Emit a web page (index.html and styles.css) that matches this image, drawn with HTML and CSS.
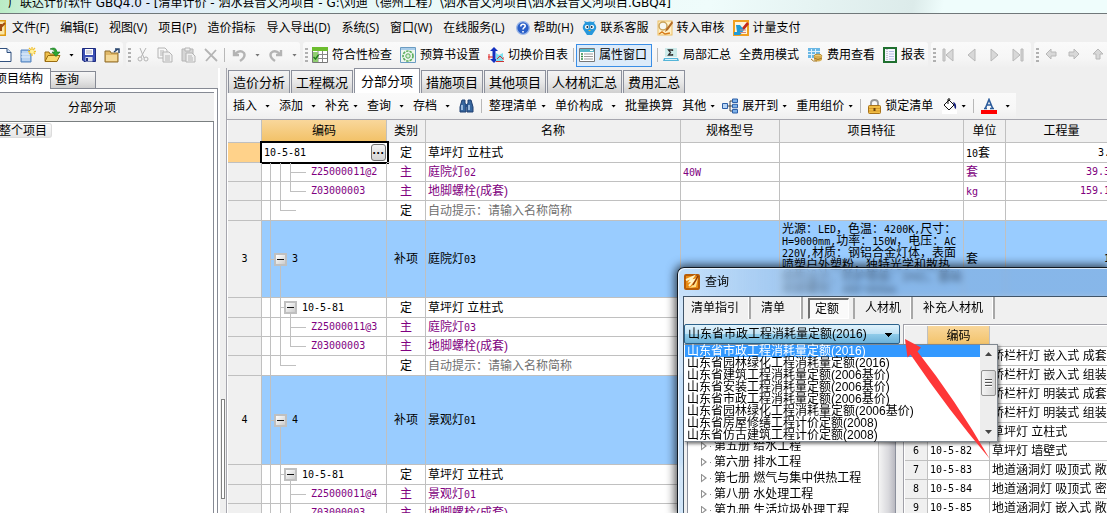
FILE: index.html
```html
<!DOCTYPE html>
<html lang="zh-CN">
<head>
<meta charset="utf-8">
<title>清单计价</title>
<link rel="stylesheet" href="styles.css">
</head>
<body>
<header class="title">广联达计价软件 GBQ4.0 - [清单计价 - 泗水县音文河项目 - G:\刘迪（德州工程）\泗水音文河项目\泗水县音文河项目.GBQ4]</header>

<nav class="menu">
  <svg class="app" width="6" height="16" viewBox="10 0 6 16"><rect x="0.5" y="0.5" width="15" height="15" rx="1" fill="#fbe6a8" stroke="#e09a10" stroke-width="2"/><path d="M5 13L15 3M11 4v7" stroke="#a04a10" stroke-width="2"/></svg>
  <button>文件(F)</button><button>编辑(E)</button><button>视图(V)</button><button>项目(P)</button><button>造价指标</button><button>导入导出(D)</button><button>系统(S)</button><button>窗口(W)</button><button>在线服务(L)</button>
  <button><svg width="14" height="14" viewBox="0 0 14 14"><circle cx="7" cy="7" r="6.3" fill="#2a5fc8" stroke="#9bb7e8" stroke-width="1.3"/><path d="M4.8 5.4c0-3 4.6-2.8 4.4-.2C9 6.800 7 6.700 7 8.500M7 10v1.600" fill="none" stroke="#fff" stroke-width="1.600"/></svg>帮助(H)</button>
  <button><svg width="15" height="16" viewBox="0 0 15 16"><path d="M3 3L2 1l3 1q3-1 6 0l2-1-1 2q3 3 2 6l-2 3-2 3H5l-2-3-2-3Q0 6 3 3z" fill="#2798dc"/><circle cx="5" cy="7" r="2.100" fill="#fff"/><circle cx="10" cy="7" r="2.100" fill="#fff"/><circle cx="5.400" cy="7" r="1" fill="#123"/><circle cx="9.600" cy="7" r="1" fill="#123"/><path d="M6 10h3l-1.500 1.500z" fill="#f6b020"/></svg>联系客服</button>
  <button><svg width="16" height="16" viewBox="0 0 16 16"><rect x="1" y="1" width="14" height="14" fill="#fff1c8" stroke="#eebf62"/><circle cx="6" cy="6" r="4" fill="#f7f7f0" stroke="#c9a25a" stroke-width="1.500"/><path d="M15 1L9 9l-1 3 3-2 5-7z" fill="#b36a24"/><path d="M2 14l3-2 3 2 5-1" stroke="#d77b1a" stroke-width="1.500" fill="none"/></svg>转入审核</button>
  <button><svg width="16" height="16" viewBox="0 0 16 16"><rect x="1" y="1" width="14" height="14" fill="#fff4dc" stroke="#f0a020" stroke-width="2"/><path d="M14 2L9 8l-1 3 3-1 5-6z" fill="#c3281c"/><path d="M3 5h4l4 5-4 5H1v-3h3z" fill="#1f9ad6"/><path d="M7 10h6M7 12.500h6" stroke="#c88" /></svg>计量支付</button>
</nav>

<div class="bars">
  <div class="band first">
    <button aria-label="新建"><svg width="12" height="16" viewBox="4 0 12 16"><path d="M2 1.500h9l4 4v9H2z" fill="#fff" stroke="#31507e"/><path d="M11 1.500v4h4" fill="#cfe0f6" stroke="#31507e"/></svg></button>
    <button aria-label="新建项目"><svg width="16" height="16" viewBox="0 0 16 16"><path d="M1 3h8l2 2v10H1z" fill="#8db7e6" stroke="#5582bd"/><path d="M3 4v10M5 4v10M7 4v10M9 5v9M1 7h9M1 10h9" stroke="#e5f0fc"/><path d="M12 0v9M8 4.500h8M9 1l6 6M15 1L9 7" stroke="#f2c230" stroke-width="1.300"/><circle cx="12" cy="4.500" r="2" fill="#fff3a0"/></svg></button>
    <button aria-label="打开"><svg width="17" height="16" viewBox="0 0 17 16"><path d="M1 14V5h4l1 2h6v7z" fill="#f0c04b" stroke="#9a6c10"/><path d="M1 14.500l3-6h12l-3 6z" fill="#fbd970" stroke="#9a6c10"/><path d="M6 2q6-3 7 3h3l-4 4.500L8 5h3Q10 2 6 2z" fill="#2ea832" stroke="#14701c" stroke-width=".6"/></svg></button>
    <button class="drop" aria-label="打开选项"></button>
    <button aria-label="保存"><svg width="14" height="14" viewBox="0 0 14 14"><path d="M.5.5h13v13H2L.5 12z" fill="#3c4fb4" stroke="#1c2b7e"/><path d="M3 1h8v6H3z" fill="#fff"/><path d="M4 3h6M4 5h6" stroke="#aab"/><path d="M3.500 9h7v4.500h-7z" fill="#d7dcea"/><path d="M5 10v3" stroke="#1c2b7e" stroke-width="2"/></svg></button>
    <button aria-label="关闭项目"><svg width="16" height="15" viewBox="0 0 16 15"><path d="M1 3h5l1 2h7v9H1z" fill="#e0b868" stroke="#8e6c2c"/><path d="M2 7h11v6H2z" fill="#f4d998"/><path d="M10 4l4-3M11 1h4v4" stroke="#28456e" stroke-width="1.500" fill="none"/></svg></button>
  </div>
  <div class="band edits">
    <i class="grip"></i>
    <button aria-label="剪切"><svg class="off" width="12" height="16" viewBox="0 0 12 16"><path d="M3 1l4 10M9 1L4 10"/><circle cx="3" cy="12" r="2"/><circle cx="9" cy="12" r="2"/></svg></button>
    <button aria-label="复制"><svg class="off" width="16" height="16" viewBox="0 0 16 16"><path d="M1 1h7l2 2v8H1zM3 4h4M3 6h5M3 8h5" /><path class="page" d="M6 5h6l3 3v7H6z"/><path d="M8 9h5M8 11h5M8 13h5"/></svg></button>
    <button aria-label="粘贴"><svg class="off" width="15" height="16" viewBox="0 0 15 16"><path class="board" d="M1 2h11v12H1z"/><path class="page" d="M4 1h5v3H4z"/><path class="page" d="M5 6h6l3 3v6H5z"/><path d="M7 9h4M7 11h5M7 13h5"/></svg></button>
    <button aria-label="删除"><svg class="off" width="14" height="16" viewBox="0 0 14 16"><path d="M1 2l12 12M12 3L2 14" stroke-width="1.800"/></svg></button>
    <i class="sep"></i>
    <button aria-label="撤销"><svg class="off" width="16" height="16" viewBox="0 0 16 16"><path d="M3 3v5h5M4 7q5-5 9-1 2 4-4 8" stroke-width="2.400"/></svg></button>
    <button class="drop gray" aria-label="撤销选项"></button>
    <button aria-label="重做"><svg class="off" width="16" height="16" viewBox="0 0 16 16"><path d="M13 3v5H8M12 7Q7 2 3 6q-2 4 4 8" stroke-width="2.400"/></svg></button>
    <button class="drop gray" aria-label="重做选项"></button>
  </div>
  <div class="band">
    <i class="grip"></i>
    <button><svg width="16" height="16" viewBox="0 0 16 16"><path d="M.5.5h15v15H.5z" fill="#fff" stroke="#777"/><path d="M0 0h16v4H0z" fill="#6cbd2e"/><path d="M1 7.500h14M1 11.500h14M6 4v11M10.500 4v11" stroke="#888"/><path d="M1 5h5v10H1z" fill="#8fce70"/><path d="M1.500 10l2 2 3-4" stroke="#1f7a1a" stroke-width="1.400" fill="none"/></svg>符合性检查</button>
    <button><svg width="16" height="16" viewBox="0 0 16 16"><path d="M.5.5h15v15H.5z" fill="#eef6f0" stroke="#6b9cc2"/><path d="M1 1h14v2H1z" fill="#a9cdea"/><circle cx="8" cy="9" r="5" fill="none" stroke="#58ac58" stroke-width="1.600" stroke-dasharray="2.500 1"/><circle cx="8" cy="9" r="2.200" fill="#d8efd8" stroke="#58ac58"/></svg>预算书设置</button>
    <button><svg width="16" height="16" viewBox="0 0 16 16"><path d="M6 0l4 4H7.500v8H10l-4 4-4-4h2.500V4H2z" fill="#1430c0"/><path d="M1 7v6M0 10h5M9 13h6v-3" stroke="#d22" fill="none"/><path d="M8 6l3 2 4-2v8H8z" fill="#7ee0ee"/><path d="M8 14.500h8M9 12l3-3 3 3" stroke="#c33" fill="none"/></svg>切换价目表</button>
    <i class="sep"></i>
    <button class="pressed"><svg width="16" height="14" viewBox="0 0 16 14"><path d="M.5.5h15v13H.5z" fill="#fff" stroke="#777"/><path d="M1 1h14v3H1z" fill="#57b8ca"/><path d="M11 2.500h3" stroke="#fff"/><path d="M2 6h2M2 8.500h2M2 11h2" stroke="#338a44" stroke-width="1.400"/><path d="M5 6h9M5 8.500h9M5 11h9" stroke="#999"/></svg>属性窗口</button>
    <i class="sep"></i>
    <button><svg width="16" height="14" viewBox="0 0 16 14"><path d="M2 0h12v9H2z" fill="#cdebea"/><path d="M9.500 3V2H5.500l2 2.500-2 2.500h4V6" stroke="#333" fill="none" stroke-width="1.300"/><path d="M1 10h14l1 3H0z" fill="#54b5d8"/><path d="M2 11.500h12" stroke="#d6f2fc"/></svg>局部汇总</button>
    <button>全费用模式</button>
    <button><svg width="16" height="14" viewBox="0 0 16 14"><path d="M1 0h12v10H1z" fill="#6ab7e4"/><path d="M1 3.500h12M1 6.500h12M4.500 1v9M8.500 1v9" stroke="#dff2fc"/><ellipse cx="11" cy="8" rx="4" ry="1.800" fill="#eccb78" stroke="#b68d35"/><path d="M7 8v4q4 3 8 0V8" fill="#d8ae50"/><path d="M7 10q4 3 8 0M4 11q2 3 6 2" stroke="#a57926" fill="none"/></svg>费用查看</button>
    <button><svg width="14" height="16" viewBox="0 0 14 16"><path d="M1 1h12v14H1z" fill="#f5f6ff" stroke="#207030" stroke-width="2"/><path d="M4 2v12" stroke="#99a" stroke-dasharray="1 1"/><path d="M6 4.500h5M6 7h5M6 9.500h5M6 12h5" stroke="#b4bce6"/></svg>报表</button>
  </div>
  <div class="band">
    <i class="grip"></i>
    <button aria-label="首条"><svg class="nav" width="16" height="16" viewBox="0 0 16 16"><path d="M3 2h2v12H3zM13 2v12L6 8z"/></svg></button>
    <button aria-label="上一条"><svg class="nav" width="16" height="16" viewBox="0 0 16 16"><path d="M11 2v12L4 8z"/></svg></button>
    <button aria-label="下一条"><svg class="nav" width="16" height="16" viewBox="0 0 16 16"><path d="M3 2v12l7-6z"/></svg></button>
    <button aria-label="末条"><svg class="nav" width="16" height="16" viewBox="0 0 16 16"><path d="M1 2v12l7-6zM9 2h2v12H9z"/></svg></button>
  </div>
  <div class="band last">
    <i class="grip"></i>
    <button aria-label="左移"><svg class="nav" width="16" height="16" viewBox="0 0 16 16"><path d="M3 7l5-5v3h5v4H8v3z"/></svg></button>
    <button aria-label="右移"><svg class="nav" width="16" height="16" viewBox="0 0 16 16"><path d="M12 7L7 2v3H2v4h5v3z"/></svg></button>
    <button aria-label="上移"><svg class="nav" width="16" height="16" viewBox="0 0 16 16"><path d="M7 2l5 5H9v5H5V7H2z"/></svg></button>
  </div>
</div>

<main>
  <aside>
    <div class="ltabs"><button class="on">项目结构</button><button>查询</button><i></i></div>
    <div class="lpanel">
      <div class="lhead">分部分项</div>
      <div class="ltree"><button>整个项目</button></div>
    </div>
  </aside>
  <div class="split"><i></i></div>

  <section class="work">
    <div class="tabs">
      <button>造价分析</button><button>工程概况</button><button class="on">分部分项</button><button>措施项目</button><button>其他项目</button><button>人材机汇总</button><button>费用汇总</button>
    </div>
    <div class="tools">
      <button>插入<i class="arr wide"></i></button><button>添加<i class="arr wide"></i></button><button>补充<i class="arr"></i></button><button>查询<i class="arr wide"></i></button><button>存档<i class="arr wide"></i></button>
      <button aria-label="查找"><svg width="15" height="14" viewBox="0 0 15 14"><path d="M3 1h3v3l1 2v7H1V8zM9 1h3l2 7v5H8V6l1-2z" fill="#37669e" stroke="#1f3f70"/><path d="M3 6v5M10 6v5" stroke="#b9d4f2" stroke-width="1.500"/><path d="M6 5h3v3H6z" fill="#274f86"/></svg></button>
      <i class="sep"></i>
      <button>整理清单<i class="arr"></i></button><button>单价构成<i class="arr wide"></i></button><button>批量换算</button><button>其他<i class="arr"></i></button>
      <button class="tight"><svg width="16" height="16" viewBox="0 0 16 16"><path d="M5 8h3M8 3v10M8 3h2M8 8h2M8 13h2" stroke="#444" fill="none"/><path d="M.5 5.500h5v5h-5z" fill="#b7d4f4" stroke="#2d5fa6"/><path d="M10.500 1h5v3.500h-5zM10.500 6.300h5v3.500h-5zM10.500 11.500h5V15h-5z" fill="#7fb2ea" stroke="#2d5fa6"/></svg>展开到<i class="arr"></i></button>
      <button>重用组价<i class="arr"></i></button>
      <i class="sep"></i>
      <button><svg width="13" height="15" viewBox="0 0 13 15"><path d="M3 7V4q0-3 3.500-3T10 4v3" fill="none" stroke="#999" stroke-width="1.800"/><rect x=".5" y="6.500" width="12" height="8" rx="1" fill="#f1bd45" stroke="#a9731a"/><path d="M1 9.500h11M1 12h11" stroke="#d79a2a"/><path d="M6.500 9v3" stroke="#6d4208" stroke-width="2"/></svg>锁定清单</button>
      <button aria-label="填充色"><svg width="15" height="16" viewBox="0 0 15 16"><path d="M0 12h15v4H0z" fill="#fff"/><path d="M2 7l5-5 5 5-5 5z" fill="#fff" stroke="#111"/><path d="M6 6V1q2-1 2 1" stroke="#111" fill="none"/><path d="M11 4q4 1 3 7-2-1-2-4z" fill="#14207c"/></svg><i class="arr"></i></button>
      <i class="sep"></i>
      <button aria-label="字体颜色"><svg width="16" height="16" viewBox="0 0 16 16"><path d="M0 12h16v4H0z" fill="#f00"/><path d="M3 10.500h3M9 10.500h4M4.500 10L8 1.500l3.500 8.500M6 7h4" stroke="#2c5c9c" stroke-width="1.600" fill="none"/></svg><i class="arr wide"></i></button>
    </div>

    <div class="gridwrap">
      <table class="grid">
        <colgroup><col class="c0"><col class="c1"><col class="c2"><col class="c3"><col class="c4"><col class="c5"><col class="c6"><col class="c7"></colgroup>
        <thead><tr><th></th><th class="cur">编码</th><th>类别</th><th>名称</th><th>规格型号</th><th>项目特征</th><th>单位</th><th>工程量</th></tr></thead>
        <tbody>
          <tr class="h20"><th class="cur2"></th><td class="edit"><div><span class="n">10-5-81</span><button aria-label="选择">···</button></div></td><td>定</td><td>草坪灯 立柱式</td><td></td><td></td><td><span class="n">10</span>套</td><td class="n">3.9</td></tr>
          <tr class="h19 mat"><th></th><td><div class="tree"><i class="v"></i><i class="v"></i><i class="v br"></i><span class="n">Z25000011@2</span></div></td><td>主</td><td>庭院灯<span class="n">02</span></td><td><span class="n">40W</span></td><td></td><td>套</td><td class="n">39.39</td></tr>
          <tr class="h19 mat"><th></th><td><div class="tree"><i class="v"></i><i class="v"></i><i class="half br"></i><span class="n">Z03000003</span></div></td><td>主</td><td>地脚螺栓(成套)</td><td></td><td></td><td><span class="n">kg</span></td><td class="n">159.12</td></tr>
          <tr class="h20"><th></th><td><div class="tree"><i class="v"></i><i class="half br"></i></div></td><td>定</td><td class="hint">自动提示：请输入名称简称</td><td></td><td></td><td></td><td></td></tr>
          <tr class="h77 item"><th class="n">3</th><td><div class="tree"><i class="v st"></i><button class="box" aria-label="折叠"></button><span class="n">3</span></div></td><td>补项</td><td>庭院灯<span class="n">03</span></td><td></td><td class="feat">光源：<span class="n">LED</span>，色温：<span class="n">4200K,</span>尺寸：<br><span class="n">H=9000mm,</span>功率：<span class="n">150W</span>，电压：<span class="n">AC</span><br><span class="n">220V,</span>材质：钢铝合金灯体，表面<br>喷塑户外塑粉，独特光学和散热<br>结构设计，防护等级：<span class="n">IP65</span>，基础<br>地脚螺栓：<span class="n">400*400mm</span></td><td>套</td><td class="n">15</td></tr>
          <tr class="h20"><th></th><td><div class="tree"><i class="v"></i><i class="v st"></i><button class="box" aria-label="折叠"></button><span class="n">10-5-81</span></div></td><td>定</td><td>草坪灯 立柱式</td><td></td><td></td><td></td><td></td></tr>
          <tr class="h19 mat"><th></th><td><div class="tree"><i class="v"></i><i class="v"></i><i class="v br"></i><span class="n">Z25000011@3</span></div></td><td>主</td><td>庭院灯<span class="n">03</span></td><td></td><td></td><td></td><td></td></tr>
          <tr class="h19 mat"><th></th><td><div class="tree"><i class="v"></i><i class="v"></i><i class="half br"></i><span class="n">Z03000003</span></div></td><td>主</td><td>地脚螺栓(成套)</td><td></td><td></td><td></td><td></td></tr>
          <tr class="h20"><th></th><td><div class="tree"><i class="v"></i><i class="half br"></i></div></td><td>定</td><td class="hint">自动提示：请输入名称简称</td><td></td><td></td><td></td><td></td></tr>
          <tr class="h89 item"><th class="n">4</th><td><div class="tree"><i class="v st"></i><button class="box" aria-label="折叠"></button><span class="n">4</span></div></td><td>补项</td><td>景观灯<span class="n">01</span></td><td></td><td></td><td></td><td></td></tr>
          <tr class="h20"><th></th><td><div class="tree"><i class="v"></i><i class="v st"></i><button class="box" aria-label="折叠"></button><span class="n">10-5-81</span></div></td><td>定</td><td>草坪灯 立柱式</td><td></td><td></td><td></td><td></td></tr>
          <tr class="h19 mat"><th></th><td><div class="tree"><i class="v"></i><i class="v"></i><i class="v br"></i><span class="n">Z25000011@4</span></div></td><td>主</td><td>景观灯<span class="n">01</span></td><td></td><td></td><td></td><td></td></tr>
          <tr class="h19 mat"><th></th><td><div class="tree"><i class="v"></i><i class="v"></i><i class="half br"></i><span class="n">Z03000003</span></div></td><td>主</td><td>地脚螺栓(成套)</td><td></td><td></td><td></td><td></td></tr>
        </tbody>
      </table>
    </div>
  </section>
</main>

<div class="dialog" role="dialog" aria-labelledby="dlg">
  <div class="dtitle"><svg width="16" height="16" viewBox="0 0 16 16"><rect x="1" y="1" width="14" height="14" rx="1" fill="#e98a12" stroke="#b65c08" stroke-width="2"/><path d="M2 6l7-3-3 4 4-1-5 6" fill="none" stroke="#fff3c4" stroke-width="2"/><path d="M4 14q7-2 10-11l-2 10z" fill="#ffe08a"/><path d="M9 11l5-9" stroke="#8c3a08" stroke-width="1.500"/></svg><span id="dlg">查询</span></div>
  <div class="dbody">
    <div class="dtabs"><button>清单指引</button><button>清单</button><button class="on">定额</button><button>人材机</button><button>补充人材机</button></div>
    <div class="dmain">
      <div class="dleft">
        <select aria-label="定额库"><option>山东省市政工程消耗量定额(2016)</option></select>
        <div class="listbox">
          <ul role="listbox" aria-label="定额库列表">
            <li role="option" aria-selected="true">山东省市政工程消耗量定额(2016)</li>
            <li role="option">山东省园林绿化工程消耗量定额(2016)</li>
            <li role="option">山东省建筑工程消耗量定额(2006基价)</li>
            <li role="option">山东省安装工程消耗量定额(2006基价)</li>
            <li role="option">山东省市政工程消耗量定额(2006基价)</li>
            <li role="option">山东省园林绿化工程消耗量定额(2006基价)</li>
            <li role="option">山东省房屋修缮工程计价定额(2008)</li>
            <li role="option">山东省仿古建筑工程计价定额(2008)</li>
          </ul>
          <div class="sb"><i class="up"></i><b></b><i class="down"></i></div>
        </div>
        <div class="dtree">
          <ul>
            <li>第一册 土石方工程</li><li>第二册 道路工程</li><li>第三册 桥涵工程</li><li>第四册 隧道工程</li>
            <li>第五册 给水工程</li><li>第六册 排水工程</li><li>第七册 燃气与集中供热工程</li><li>第八册 水处理工程</li><li>第九册 生活垃圾处理工程</li>
          </ul>
          <div class="track"></div>
        </div>
      </div>
      <div class="dright">
        <table class="dgrid">
          <colgroup><col class="d0"><col class="d1"><col></colgroup>
          <thead><tr><th></th><th class="cur">编码</th><th></th></tr></thead>
          <tbody>
            <tr><th class="n">1</th><td class="n">10-5-77</td><td>桥栏杆灯 嵌入式 成套</td></tr>
            <tr><th class="n">2</th><td class="n">10-5-78</td><td>桥栏杆灯 嵌入式 组装</td></tr>
            <tr><th class="n">3</th><td class="n">10-5-79</td><td>桥栏杆灯 明装式 成套</td></tr>
            <tr><th class="n">4</th><td class="n">10-5-80</td><td>桥栏杆灯 明装式 组装</td></tr>
            <tr><th class="n">5</th><td class="n">10-5-81</td><td>草坪灯 立柱式</td></tr>
            <tr><th class="n">6</th><td class="n">10-5-82</td><td>草坪灯 墙壁式</td></tr>
            <tr><th class="n">7</th><td class="n">10-5-83</td><td>地道涵洞灯 吸顶式 敞开</td></tr>
            <tr><th class="n">8</th><td class="n">10-5-84</td><td>地道涵洞灯 吸顶式 密封</td></tr>
            <tr><th class="n">9</th><td class="n">10-5-85</td><td>地道涵洞灯 嵌入式 敞开</td></tr>
          </tbody>
        </table>
      </div>
    </div>
  </div>
  <svg class="pointer" width="86" height="120" viewBox="0 0 86 120" aria-hidden="true"><path d="M0 0L16 8.500 12.500 12.500Q50 60 84.500 119.500 44 72 5.500 15.500L2.500 18.500z" fill="#fe3738"/></svg>
</div>
</body>
</html>
```

FILE: styles.css
```css
* { box-sizing: border-box; }
html, body { height: 100%; }
body {
  margin: 0;
  display: flex;
  flex-direction: column;
  overflow: hidden;
  background: #efefef;
  color: #000;
  font: 12px/16px "Open Sans", "Noto Sans CJK SC", sans-serif;
  white-space: nowrap;
}
button {
  display: flex;
  align-items: center;
  gap: 4px;
  flex: none;
  margin: 0;
  padding: 0;
  border: 0;
  background: none;
  color: inherit;
  font: inherit;
}
svg { display: block; flex: none; }
ul { margin: 0; padding: 0; list-style: none; }
i { flex: none; }

.title {
  flex: none;
  height: 14px;
  padding-left: 8px;
  overflow: hidden;
  font-family: "DejaVu Sans", "Noto Sans CJK SC", sans-serif;
  line-height: 6px;
  border-bottom: 1px solid #70787a;
  background: linear-gradient(100deg, #b9ecc4 0, #dff3f0 60px, #dbe6f8 120px, #e6f7f6 260px, #effcfb 700px, #dcebea 900px, #effdfc 930px);
}
.menu {
  flex: none;
  display: flex;
  align-items: center;
  gap: 11px;
  height: 28px;
}
.menu .app { margin-right: -5px; }
.menu button:has(svg) { margin-right: -3px; }

.bars { flex: none; display: flex; height: 26px; overflow: hidden; }
.band {
  flex: none;
  display: flex;
  align-items: center;
  gap: 8px;
  margin-right: 3px;
  padding: 0 3px 0 2px;
  border-radius: 3px;
  background: linear-gradient(#fafafa, #f6f6f6 60%, #efefef);
}
.band.first { padding-left: 0; }
.band.last { flex: 1; margin-right: 0; }
.grip {
  width: 3px;
  height: 15px;
  margin-right: -4px;
  background: repeating-linear-gradient(#b0b0b0 0 2px, transparent 2px 4px);
}
.edits .grip { margin-right: -2px; }
.sep { width: 1px; height: 14px; margin: 0 -3px; background: #b8b8b8; }
.edits .sep { margin: 0 -2px; }
.tools .sep { margin: 0 -2px; }
.drop, .arr {
  width: 5px;
  height: 3px;
  background: #000;
  clip-path: polygon(0 0, 100% 0, 50% 100%);
}
.drop.gray { background: #777; }
.arr.wide { margin-left: 4px; }
.off path, .off circle { fill: none; stroke: #b4b4b4; }
.off .page { fill: #f0f0f0; }
.off .board { fill: #d6d6d6; }
.nav path { fill: #d8d8d8; stroke: #b8b8b8; }
.pressed {
  height: 23px;
  margin-left: -3px;
  padding: 0 4px 0 2px;
  border: 1px solid #3a8ee6;
  background: #dcebfa;
}

main { flex: 1; display: flex; min-height: 0; }
aside { flex: none; display: flex; flex-direction: column; width: 218px; }
.ltabs { display: flex; align-items: flex-end; height: 21px; }
.ltabs button {
  height: 18px;
  width: 45px;
  padding-left: 4px;
  border: 1px solid #868a94;
  border-left: 0;
  background: linear-gradient(#f6f6f6, #e2e2e2 60%, #cfcfcf);
}
.ltabs .on {
  height: 21px;
  width: 51px;
  justify-content: flex-end;
  padding: 0 7px 0 0;
  border-bottom: 0;
  background: #fff;
}
.ltabs i { flex: 1; border-bottom: 1px solid #868a94; }
.lpanel {
  flex: 1;
  display: flex;
  flex-direction: column;
  padding: 3px 3px 0 0;
  border-right: 1px solid #868a94;
  background: #fff;
}
.lhead {
  height: 30px;
  padding: 0 30px 0 0;
  line-height: 30px;
  text-align: center;
  border-top: 1px solid #868a94;
  border-bottom: 1px solid #7a7f80;
  background: #f0f0f0;
}
.ltree { flex: 1; border-right: 1px solid #868a94; }
.ltree button {
  width: 52px;
  height: 15px;
  margin-top: 1px;
  justify-content: flex-end;
  padding-right: 4px;
  border: 1px solid #dcdcdc;
  border-left: 0;
  border-radius: 0 3px 3px 0;
  background: linear-gradient(#fafafa, #e6e6e6);
}
.split {
  flex: none;
  display: flex;
  align-items: center;
  width: 9px;
  padding: 316px 0 0 1px;
  border-left: 2px solid #fff;
  border-right: 1px solid #a6a6ae;
}
.split i { width: 4px; height: 100px; border: 1px solid #808080; background: #fff; }

.work { flex: 1; display: flex; flex-direction: column; min-width: 0; }
.tabs { flex: none; display: flex; align-items: flex-end; gap: 1px; height: 25px; padding-left: 1px; font-size: 13px; }
.tabs button {
  height: 23px;
  padding: 0 4px;
  border: 1px solid #8c909c;
  border-bottom: 0;
  background: linear-gradient(#f4f4f4, #e8e8e8 50%, #d0d0d0);
}
.tabs .on { height: 25px; padding: 0 6px; background: #fff; }
.tools {
  flex: none;
  display: flex;
  align-items: center;
  align-self: flex-start;
  gap: 9px;
  height: 26px;
  padding: 0 6px;
  background: linear-gradient(#fafafa, #f7f7f7 60%, #efefef);
}
.tools .tight { margin-left: -2px; }

.gridwrap { flex: 1; min-height: 0; overflow: hidden; border-top: 1px solid #a6a6ae; background: #fff; }
table { border-collapse: separate; border-spacing: 0; table-layout: fixed; }
.grid, .dgrid, .dialog { font-family: "Liberation Sans", "Noto Sans CJK SC", sans-serif; }
.grid { width: 890px; margin-left: 1px; line-height: 12px; }
th, td {
  height: 18px;
  padding: 0;
  font-weight: normal;
  overflow: hidden;
  border-right: 1px solid #c0c0c0;
  border-bottom: 1px solid #c0c0c0;
}
th { background: #f0f0f0; }
.cur { background: linear-gradient(#f9d79b, #f2c166); }
.grid thead th { height: 23px; }
.c0 { width: 34px; }
.c1 { width: 125px; }
.c2 { width: 39px; }
.c3 { width: 255px; }
.c4 { width: 99px; }
.c5 { width: 184px; }
.c6 { width: 42px; }
.c7 { width: 112px; }
.grid td { padding-left: 2px; }
.grid td:nth-child(2) { padding-left: 8px; }
.grid td:nth-child(3) { padding: 0; text-align: center; }
.grid td:nth-child(8) { padding-right: 1px; text-align: right; }
.n { font-family: "DejaVu Sans Mono", monospace; font-size: 10px; }
td > .n { line-height: 0; }
.grid .cur2 { background: #ffd28a; }
.mat td { color: #800080; }
.grid .hint { color: #707070; }
.item td { background: #99ccff; }
.h20 td { height: 20px; }
.h19 td { height: 19px; }
.h77 td { height: 77px; }
.h89 td { height: 89px; }
.h20 .tree { height: 19px; }
.h19 .tree { height: 18px; }
.h77 .tree { height: 76px; }
.h89 .tree { height: 88px; }

.grid td.edit { padding: 0; overflow: visible; }
.edit div {
  display: flex;
  align-items: center;
  justify-content: space-between;
  height: 23px;
  margin: -2px -3px -2px -2px;
  padding: 0 1px 0 2px;
  border: 2px solid #000;
  background: #fff;
}
.edit button {
  width: 15px;
  height: 17px;
  justify-content: center;
  border: 1px solid #707070;
  border-radius: 3px;
  background: linear-gradient(#f4f4f4, #d4d4d4);
  font-weight: bold;
}

.tree { display: flex; align-items: center; }
.tree i { align-self: stretch; width: 10px; background: linear-gradient(#c0c0c0, #c0c0c0) 0 0 / 1px 100% no-repeat; }
.tree .half { background-size: 1px 50%; }
.tree .br {
  width: 21px;
  background: linear-gradient(#c0c0c0, #c0c0c0) 0 0 / 1px 100% no-repeat, linear-gradient(#c0c0c0, #c0c0c0) 0 50% / 16px 1px no-repeat;
}
.tree .half.br { background-size: 1px 50%, 16px 1px; }
.tree .st { background: linear-gradient(#c0c0c0, #c0c0c0) 0 0 / 1px 100% no-repeat, linear-gradient(#c0c0c0, #c0c0c0) 0 50% / 6px 1px no-repeat; }
.box {
  align-self: stretch;
  justify-content: center;
  width: 13px;
  margin: 0 5px 0 -6px;
  background: linear-gradient(#c0c0c0, #c0c0c0) 6px 100% / 1px 50% no-repeat;
}
.box::before {
  content: "";
  flex: none;
  box-sizing: border-box;
  width: 13px;
  height: 13px;
  border: 2px solid #c0c0c0;
  background: linear-gradient(#111, #111) 50% 50% / 7px 1px no-repeat, linear-gradient(135deg, #fff, #ccc);
}

.dialog {
  position: absolute;
  left: 677px;
  top: 267px;
  right: 0;
  bottom: 0;
  display: flex;
  flex-direction: column;
  padding-left: 5px;
  border: 1px solid #101820;
  border-width: 1px 0 0 1px;
  border-radius: 7px 0 0 0;
  background: linear-gradient(90deg, rgba(205, 228, 250, .85), rgba(120, 165, 215, .55) 180px);
  backdrop-filter: blur(3px);
  box-shadow: 0 0 10px 2px rgba(0, 0, 0, .7), inset 1px 1px 0 rgba(255, 255, 255, .7);
}
.dtitle { flex: none; display: flex; align-items: center; gap: 5px; height: 28px; padding-left: 1px; }
.dbody {
  flex: 1;
  display: flex;
  flex-direction: column;
  min-height: 0;
  border: 1px solid #405468;
  border-width: 1px 0 0 1px;
  background: #f0f0f0;
}
.dtabs { flex: none; display: flex; height: 22px; }
.dtabs button { padding: 0 10px; border-right: 2px solid #a8a8a8; box-shadow: inset -1px 0 0 #fff; }
.dtabs button:first-child { padding-left: 7px; }
.dtabs button:nth-child(2) { padding: 0 16px 0 10px; }
.dtabs .on {
  margin: 1px 4px 0 5px;
  padding: 0 9px 0 5px;
  border: 1px solid #fff;
  border-top: 2px solid #707070;
  border-left: 2px solid #707070;
  background: #fafafa;
  box-shadow: 4px 0 0 #f0f0f0, 6px 0 0 #a8a8a8;
}
.dtabs .on + button { margin-left: 2px; }
.dmain { flex: 1; display: flex; min-height: 0; padding-top: 5px; }
.dleft { flex: none; position: relative; display: flex; flex-direction: column; width: 219px; padding-right: 3px; }
.dleft select {
  appearance: none;
  flex: none;
  height: 20px;
  padding: 0 3px;
  border: 1px solid #2c628b;
  border-radius: 2px;
  font: inherit;
  color: #000;
  background: linear-gradient(#000, #000) right 7px top 8px / 7px 1px no-repeat, linear-gradient(#000, #000) right 8px top 9px / 5px 1px no-repeat, linear-gradient(#000, #000) right 9px top 10px / 3px 1px no-repeat, linear-gradient(#000, #000) right 10px top 11px / 1px 1px no-repeat, linear-gradient(#e2f3fc, #c0e2f5 48%, #8fcbe9 52%, #6cb2da);
}
.listbox {
  position: absolute;
  z-index: 2;
  top: 20px;
  left: 0;
  display: flex;
  width: 314px;
  height: 98px;
  border: 1px solid #808890;
  border-left-color: #fff;
  background: #fff;
  box-shadow: 2px 2px 3px rgba(0, 0, 0, .5);
}
.listbox ul { flex: 1; }
.listbox li { padding-left: 2px; line-height: 12px; }
.listbox li[aria-selected] { color: #fff; background: #3399ff; }
.sb {
  display: flex;
  flex-direction: column;
  align-items: center;
  justify-content: space-between;
  width: 17px;
  padding: 7px 0;
  background: #ededed;
}
.sb i { width: 7px; height: 4px; background: #444; clip-path: polygon(0 0, 100% 0, 50% 100%); }
.sb .up { clip-path: polygon(50% 0, 100% 100%, 0 100%); }
.sb b {
  width: 15px;
  height: 26px;
  margin-bottom: 20px;
  border: 1px solid #909090;
  border-radius: 2px;
  background: repeating-linear-gradient(#555 0 1px, #fff 1px 2px, transparent 2px 3px) 50% 50% / 7px 9px no-repeat, linear-gradient(90deg, #f4f4f4, #d4d4d4);
}
.dtree { flex: 1; display: flex; min-height: 0; margin: 3px 4px 0 3px; border: 1px solid #8c909c; border-bottom: 0; background: #fff; }
.dtree ul { flex: 1; padding: 26px 0 0 13px; overflow: hidden; }
.dtree li { display: flex; align-items: center; height: 16px; }
.dtree li::before {
  content: "";
  order: -2;
  width: 6px;
  height: 9px;
  margin-right: 3px;
  background: #909090;
  clip-path: polygon(0 0, 100% 50%, 0 100%, 0 0, 1px 2px, 1px 7px, 4px 50%, 1px 2px);
}
.dtree li::after { content: ""; order: -1; width: 1px; height: 1px; margin-right: 3px; background: #808080; }
.track { width: 17px; border-left: 1px solid #c8c8c8; background: linear-gradient(90deg, #f4f4f4, #d8d8dc 60%, #b8b8c0); }
.dright {
  flex: 1;
  min-width: 0;
  overflow: hidden;
  padding: 1px 0 0 1px;
  border: 1px solid #a0a0a8;
  border-width: 1px 0 0 1px;
  background: #fff;
}
.dgrid { width: 260px; line-height: 12px; }
.d0 { width: 23px; }
.d1 { width: 62px; }
.dgrid th, .dgrid td { height: 19px; }
.dgrid thead th { height: 21px; }
.dgrid td { padding-left: 2px; }
.pointer { position: absolute; z-index: 3; left: 227px; top: 71px; }
```
